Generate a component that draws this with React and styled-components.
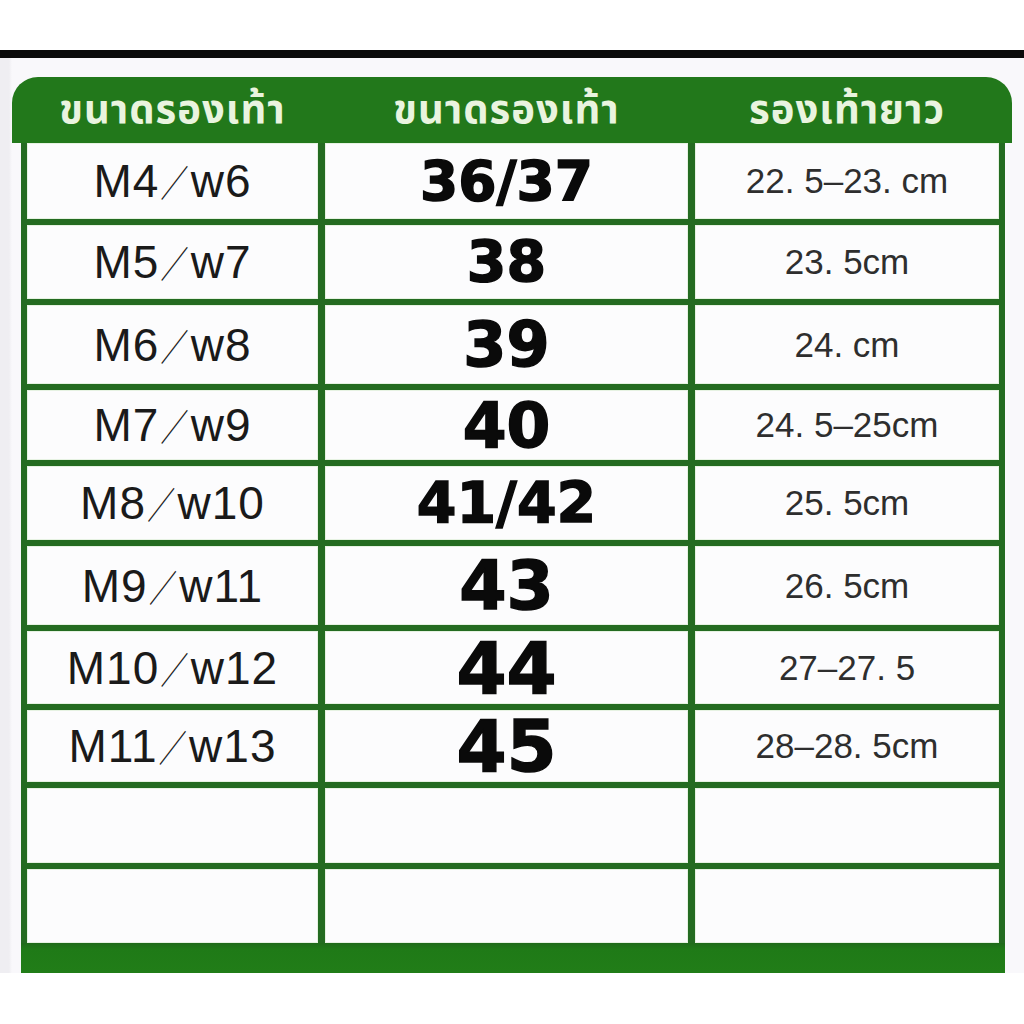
import React from 'react';
import styled, { createGlobalStyle } from 'styled-components';

// --- colours taken from the chart ---
const GREEN = '#22781b';
const LINE = '#246b21';

const GlobalStyle = createGlobalStyle`
  html, body {
    margin: 0;
    padding: 0;
    background: #ffffff;
  }
`;

const Page = styled.div`
  width: 1024px;
  height: 1024px;
  display: flex;
  flex-direction: column;
  background: #ffffff;
`;

const TopGap = styled.div`
  height: 50px;
  flex: none;
`;

const BlackBar = styled.div`
  height: 8px;
  flex: none;
  background: #0b0b0b;
`;

const Panel = styled.div`
  flex: none;
  height: 915px;
  box-sizing: border-box;
  padding: 19px 12px 0 12px;
  display: flex;
  flex-direction: column;
  background: linear-gradient(to right, #efeef2 0, #efeef2 9px, #f9f8fb 12px);
`;

const Header = styled.div`
  height: 66px;
  flex: none;
  box-sizing: border-box;
  padding-left: 15px;
  display: grid;
  grid-template-columns: 291px 363px 304px;
  column-gap: 7px;
  align-items: center;
  background: ${GREEN};
  border-radius: 26px 26px 0 0;
`;

const HeadCell = styled.div`
  text-align: center;
  font-family: 'Noto Sans Thai', 'Noto Sans', 'DejaVu Sans', sans-serif;
  font-weight: 700;
  font-size: 40px;
  letter-spacing: 1px;
  color: #e9f4df;
  line-height: 1;
  padding-top: 2px;
`;

const Body = styled.div`
  margin: 0 7px 0 9px;
  padding: 0 6px;
  display: flex;
  flex-direction: column;
  gap: 6px;
  background: ${LINE};
`;

const Row = styled.div`
  height: ${(p) => p.$h}px;
  display: grid;
  grid-template-columns: 291px 363px 304px;
  column-gap: 7px;
`;

const Cell = styled.div`
  display: flex;
  align-items: center;
  justify-content: center;
  background: #fcfcfd;
  box-shadow: inset 0 0 0 1px #e6f2e2;
`;

const SizeCode = styled.span`
  display: inline-flex;
  align-items: baseline;
  font-family: 'Liberation Sans', Arial, sans-serif;
  font-size: 46px;
  color: #1a1a1a;
  letter-spacing: 1px;
`;

const Slash = styled.span`
  display: inline-block;
  font-family: 'Noto Sans CJK SC', sans-serif;
  font-weight: 300;
  font-size: 0.62em;
  margin: 0 1px;
  transform: scaleY(1.3);
  transform-origin: 50% 80%;
`;

const EuSize = styled.span`
  font-family: 'DejaVu Sans', sans-serif;
  font-weight: 700;
  font-size: ${(p) => p.$size}px;
  color: #0a0a0a;
  -webkit-text-stroke: 1.5px #0a0a0a;
  line-height: 1;
`;

const Length = styled.span`
  font-family: 'Liberation Sans', Arial, sans-serif;
  font-size: 35px;
  color: #2e2e2e;
`;

const Footer = styled.div`
  margin: 0 7px 0 9px;
  height: 30px;
  background: linear-gradient(to bottom, #1f6a1a 0, #1f7a17 6px, #217d18 100%);
`;

const rows = [
  { code: ['M4', 'w6'], eu: '36/37', euSize: 55, len: '22. 5–23. cm', h: 76 },
  { code: ['M5', 'w7'], eu: '38', euSize: 57, len: '23. 5cm', h: 74 },
  { code: ['M6', 'w8'], eu: '39', euSize: 62, len: '24. cm', h: 79 },
  { code: ['M7', 'w9'], eu: '40', euSize: 63, len: '24. 5–25cm', h: 70 },
  { code: ['M8', 'w10'], eu: '41/42', euSize: 57, len: '25. 5cm', h: 74 },
  { code: ['M9', 'w11'], eu: '43', euSize: 68, len: '26. 5cm', h: 79 },
  { code: ['M10', 'w12'], eu: '44', euSize: 72, len: '27–27. 5', h: 73 },
  { code: ['M11', 'w13'], eu: '45', euSize: 72, len: '28–28. 5cm', h: 72 },
  { code: null, h: 75 },
  { code: null, h: 74 },
];

export default function App() {
  return (
    <Page>
      <GlobalStyle />
      <TopGap />
      <BlackBar />
      <Panel>
        <Header>
          <HeadCell>ขนาดรองเท้า</HeadCell>
          <HeadCell>ขนาดรองเท้า</HeadCell>
          <HeadCell>รองเท้ายาว</HeadCell>
        </Header>
        <Body>
          {rows.map((r, i) => (
            <Row key={i} $h={r.h}>
              <Cell>
                {r.code && (
                  <SizeCode>
                    {r.code[0]}
                    <Slash>／</Slash>
                    {r.code[1]}
                  </SizeCode>
                )}
              </Cell>
              <Cell>{r.code && <EuSize $size={r.euSize}>{r.eu}</EuSize>}</Cell>
              <Cell>{r.code && <Length>{r.len}</Length>}</Cell>
            </Row>
          ))}
        </Body>
        <Footer />
      </Panel>
    </Page>
  );
}
